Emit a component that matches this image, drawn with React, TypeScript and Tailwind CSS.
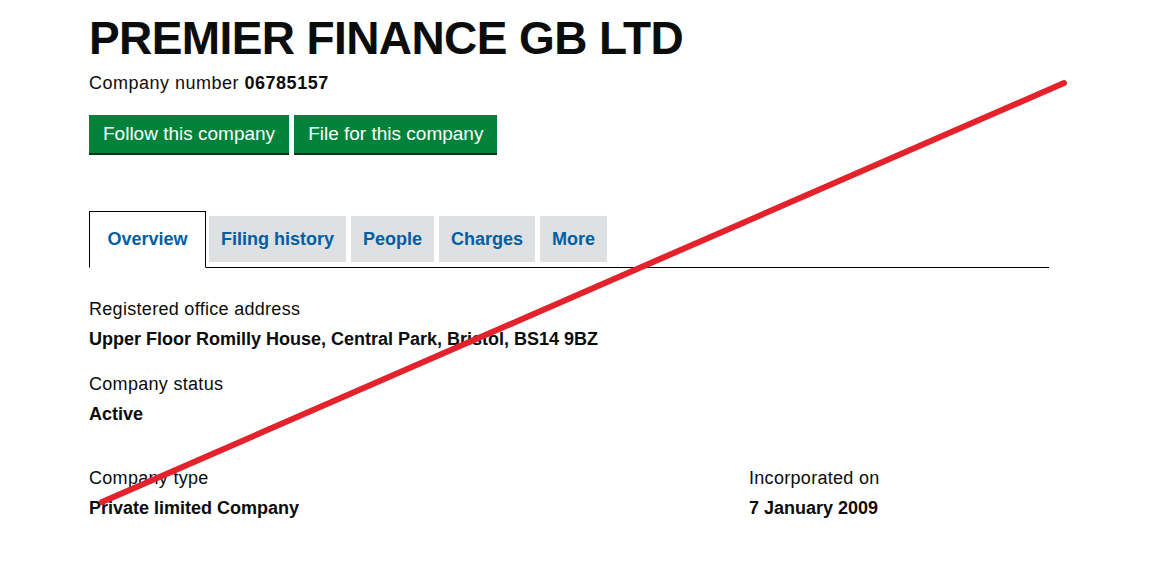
import React from 'react';

const TABS = ['Filing history', 'People', 'Charges', 'More'];

function Field({ label, value }: { label: string; value: string }) {
  return (
    <div>
      <p className="text-[18px] leading-[24px] tracking-[0.3px] text-[#0b0c0c]">{label}</p>
      <p className="mt-[6px] text-[18px] leading-[24px] font-bold text-[#0b0c0c]">{value}</p>
    </div>
  );
}

export default function App() {
  return (
    <div className="relative w-[1163px] h-[569px] overflow-hidden bg-white font-['Liberation_Sans',Arial,sans-serif] text-[#0b0c0c]">
      <div className="pl-[89px] w-[1049px]">
        <h1 className="pt-[14px] text-[46px] leading-[48px] font-bold tracking-[-0.6px]">PREMIER FINANCE GB LTD</h1>
        <p className="mt-[10px] text-[18px] leading-[22px] tracking-[0.5px]">
          Company number <strong className="font-bold">06785157</strong>
        </p>

        <div className="mt-[21px] flex gap-[5px]">
          <button className="h-[40px] px-[14px] bg-[#00823b] text-white text-[19px] border-b-2 border-[#003618]">
            Follow this company
          </button>
          <button className="h-[40px] px-[14px] bg-[#00823b] text-white text-[19px] border-b-2 border-[#003618]">
            File for this company
          </button>
        </div>

        <div className="mt-[56px] flex items-start border-b border-black">
          <div className="h-[57px] w-[117px] -mb-px border border-black border-b-white bg-white flex items-center justify-center text-[18px] font-bold text-[#005ea5]">
            Overview
          </div>
          <div className="mt-[5px] flex gap-[5px] ml-[3px]">
            {TABS.map((t) => (
              <div
                key={t}
                className="h-[46px] px-[12px] bg-[#dee0e2] flex items-center text-[18px] font-bold text-[#005ea5]"
              >
                {t}
              </div>
            ))}
          </div>
        </div>

        <div className="mt-[29px] flex flex-col gap-[21px]">
          <Field label="Registered office address" value="Upper Floor Romilly House, Central Park, Bristol, BS14 9BZ" />
          <Field label="Company status" value="Active" />
        </div>

        <div className="mt-[40px] grid grid-cols-[660px_1fr]">
          <Field label="Company type" value="Private limited Company" />
          <Field label="Incorporated on" value="7 January 2009" />
        </div>
      </div>

      <svg className="absolute inset-0 pointer-events-none" width="1163" height="569">
        <line x1="102" y1="502" x2="1064" y2="83" stroke="#e3222b" strokeWidth="6" strokeLinecap="round" />
      </svg>
    </div>
  );
}
